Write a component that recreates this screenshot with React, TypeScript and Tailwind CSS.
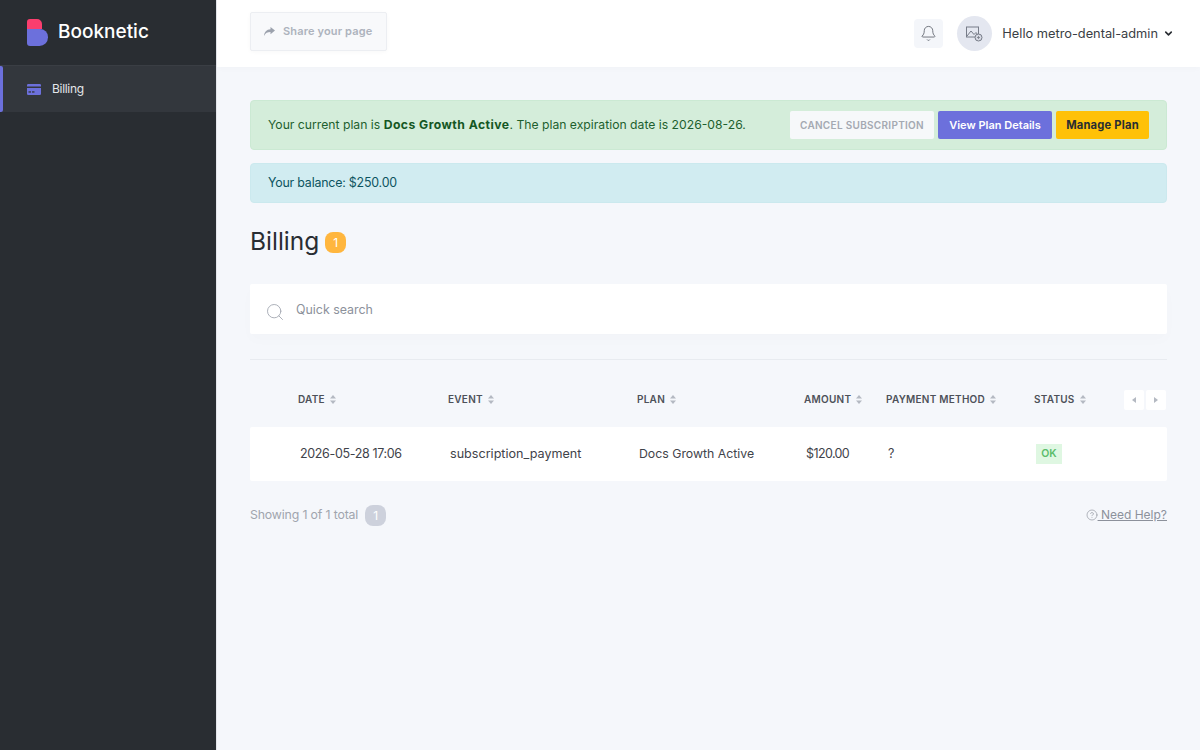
import { Bell, ChevronDown, Search, CircleHelp } from "lucide-react";

const COLS = "grid grid-cols-[150px_189px_167px_82px_148px_1fr] pl-[48px]";
const FONT = "[font-family:Inter,'Noto_Sans',sans-serif]";

const HEADERS = ["DATE", "EVENT", "PLAN", "AMOUNT", "PAYMENT METHOD", "STATUS"];

function SortIcon() {
  return (
    <svg width="6" height="9" viewBox="0 0 6 9" className="ml-[5px] fill-[#b4b9c2]">
      <path d="M3 0 6 3.4H0z" />
      <path d="M3 9 0 5.6h6z" />
    </svg>
  );
}

function Logo() {
  return (
    <svg width="21" height="27" viewBox="0 0 21 27">
      <path d="M0 3a3 3 0 0 1 3-3h7a5 5 0 0 1 5 5v5H0z" fill="#fb3e6e" />
      <path d="M0 10h13a8 8 0 0 1 8 8v.5a8.5 8.5 0 0 1-8.5 8.5H3a3 3 0 0 1-3-3z" fill="#6c70dc" />
    </svg>
  );
}

function CardIcon() {
  return (
    <svg width="14" height="11" viewBox="0 0 14 11" fill="#6c70dc">
      <path d="M1.2 0h11.6A1.2 1.2 0 0 1 14 1.2V2.4H0V1.2A1.2 1.2 0 0 1 1.2 0z" />
      <path d="M0 4h14v5.8a1.2 1.2 0 0 1-1.2 1.2H1.2A1.2 1.2 0 0 1 0 9.800z" />
      <rect x="1.500" y="7.300" width="2.500" height="1.300" fill="#33373d" />
      <rect x="5" y="7.300" width="2.500" height="1.300" fill="#33373d" />
    </svg>
  );
}

function Avatar() {
  return (
    <svg width="17" height="16" viewBox="0 0 17 16" fill="none" stroke="#777c88" strokeWidth="1">
      <rect x="0.500" y="1" width="12" height="10" />
      <path d="M1 10 5 5l3 3.500 2-2 2 2.500" />
      <circle cx="12.500" cy="11.500" r="3.500" fill="#d6d9e3" />
      <path d="M12.500 10v3M11 11.500h3" strokeWidth="0.800" />
    </svg>
  );
}

export default function App() {
  return (
    <div className={`flex h-[750px] w-[1200px] overflow-hidden bg-[#f5f7fb] text-[#292d32] ${FONT}`}>
      <aside className="w-[217px] shrink-0 border-r border-[#e3e5ea] bg-[#292d32]">
        <div className="flex h-[66px] items-center gap-[10px] border-b border-[#3a3e44] pb-[1px] pl-[27px]">
          <Logo />
          <span className="text-[19px] font-medium text-white">Booknetic</span>
        </div>
        <div className="relative flex h-[46px] items-center gap-[11px] bg-[#33373d] pl-[27px]">
          <span className="absolute left-0 top-0 h-full w-[3px] rounded-r-[2px] bg-[#6c70dc]" />
          <CardIcon />
          <span className="text-[12px] tracking-[-0.3px] text-[#e4e6ea]">Billing</span>
        </div>
      </aside>

      <div className="flex min-w-0 flex-1 flex-col">
        <header className="flex h-[67px] shrink-0 items-center bg-white pl-[33px] pr-[26px] shadow-[0_2px_6px_rgba(0,0,0,0.02)]">
          <button
            type="button"
            className="mb-[4px] flex h-[39px] w-[137px] items-center gap-[8px] rounded-[2px] border border-[#eceef2] bg-[#f8f9fb] pl-[13px] text-[11px] font-semibold tracking-[0.15px] text-[#adb3bd] shadow-[0_1px_4px_rgba(0,0,0,0.03)]"
          >
            <svg width="11" height="9" viewBox="0 0 11 9" fill="#9ca2ad">
              <path d="M6.500 0 11 3.600 6.500 7.200V5C3.500 5 1.600 5.800 0 9c.3-4 2.500-6.600 6.500-6.800z" />
            </svg>
            Share your page
          </button>
          <div className="ml-auto flex items-center">
            <span className="flex h-[29px] w-[29px] items-center justify-center rounded-[4px] bg-[#f4f6fa]">
              <Bell size={17} strokeWidth={1.2} className="text-[#5d626c]" />
            </span>
            <span className="ml-[14px] flex h-[35px] w-[35px] items-center justify-center rounded-full bg-[#e4e7f0]">
              <Avatar />
            </span>
            <span className="ml-[10px] text-[12.8px] text-[#3a3e44]">Hello metro-dental-admin</span>
            <ChevronDown size={11} strokeWidth={3.5} className="ml-[5px] text-[#292d32]" />
          </div>
        </header>

        <main className="flex flex-1 flex-col px-[33px] pt-[33px]">
          <div className="flex h-[50px] items-center justify-between rounded-[4px] border border-[#cbe9d3] bg-[#d4edda] px-[17px] text-[12.2px] text-[#1d5f2e]">
            <span>
              Your current plan is <b className="font-bold tracking-[0.45px] text-[#155724]">Docs Growth Active</b>. The plan expiration date is 2026-08-26.
            </span>
            <div className="flex gap-[4px]">
              <span className="flex h-[28px] w-[144px] items-center justify-center rounded-[2px] bg-[#f6f8fa] text-[10px] font-semibold tracking-[0.3px] text-[#a4a9b2]">
                CANCEL SUBSCRIPTION
              </span>
              <span className="flex h-[28px] w-[114px] items-center justify-center rounded-[2px] bg-[#6c70dc] text-[11px] font-semibold text-white">
                View Plan Details
              </span>
              <span className="flex h-[28px] w-[93px] items-center justify-center rounded-[2px] bg-[#ffc107] text-[11.2px] font-bold tracking-[0.2px] text-[#292d32]">
                Manage Plan
              </span>
            </div>
          </div>

          <div className="mt-[13px] flex h-[40px] items-center rounded-[4px] border border-[#cbe9ee] bg-[#d1ecf1] pl-[17px] text-[12.4px] tracking-[-0.2px] text-[#0c5460]">
            Your balance: $250.00
          </div>

          <div className="mt-[22px] flex h-[32px] items-center gap-[6px]">
            <h1 className="text-[24.5px] font-normal text-[#292d32]">Billing</h1>
            <span className="mt-[3px] flex h-[21px] w-[21px] items-center justify-center rounded-[8px] bg-[#ffb63e] text-[12px] text-white">
              1
            </span>
          </div>

          <div className="mt-[27px] flex h-[50px] items-center rounded-[2px] bg-white pl-[14.5px] shadow-[0_6px_14px_rgba(0,0,0,0.015)]">
            <Search size={20} strokeWidth={1.1} className="mt-[6px] text-[#a4a9b2]" />
            <span className="ml-[11.5px] pt-[2px] text-[12.4px] text-[#8c919b]">Quick search</span>
          </div>

          <div className="mt-[25px] border-t border-[#e8ebf0]" />

          <div className={`${COLS} relative mt-[30px] h-[20px] items-center`}>
            {HEADERS.map((h) => (
              <span key={h} className="flex items-center pb-[2px] text-[10px] font-semibold tracking-[0.25px] text-[#4d5159]">
                {h}
                <SortIcon />
              </span>
            ))}
            <div className="absolute right-[1px] top-0 flex gap-[2px]">
              <span className="flex h-[20px] w-[20px] items-center justify-center rounded-[2px] bg-white">
                <svg width="4" height="6" viewBox="0 0 4 6" fill="#b4b9c2"><path d="M4 0v6L0 3z" /></svg>
              </span>
              <span className="flex h-[20px] w-[20px] items-center justify-center rounded-[2px] bg-white">
                <svg width="4" height="6" viewBox="0 0 4 6" fill="#b4b9c2"><path d="M0 0v6l4-3z" /></svg>
              </span>
            </div>
          </div>

          <div className={`${COLS} mt-[17px] h-[54px] items-center rounded-[2px] bg-white text-[12.5px] text-[#3f434a] [&>*]:pl-[2px]`}>
            <span className="tracking-[-0.35px]">2026-05-28 17:06</span>
            <span className="text-[12.6px]">subscription_payment</span>
            <span className="text-[12.3px]">Docs Growth Active</span>
            <span className="tracking-[-0.6px]">$120.00</span>
            <span className="pl-[3px]">?</span>
            <span>
              <span className="flex h-[20px] w-[26px] items-center justify-center bg-[#dff7e2] text-[10.5px] font-semibold text-[#5bbd6b]">
                OK
              </span>
            </span>
          </div>

          <div className="mt-[24px] flex items-center justify-between text-[#a0a5ae]">
            <span className="flex items-center gap-[7px] text-[12.3px] tracking-[-0.15px]">
              Showing 1 of 1 total
              <span className="flex h-[21px] w-[21px] items-center justify-center rounded-[8px] bg-[#cdd1dc] text-[12px] text-white">
                1
              </span>
            </span>
            <span className="flex items-center pb-[2px] text-[12px] text-[#8c919b]">
              <CircleHelp size={12} strokeWidth={1.3} />
              <span className="underline">&nbsp;Need Help?</span>
            </span>
          </div>
        </main>
      </div>
    </div>
  );
}
